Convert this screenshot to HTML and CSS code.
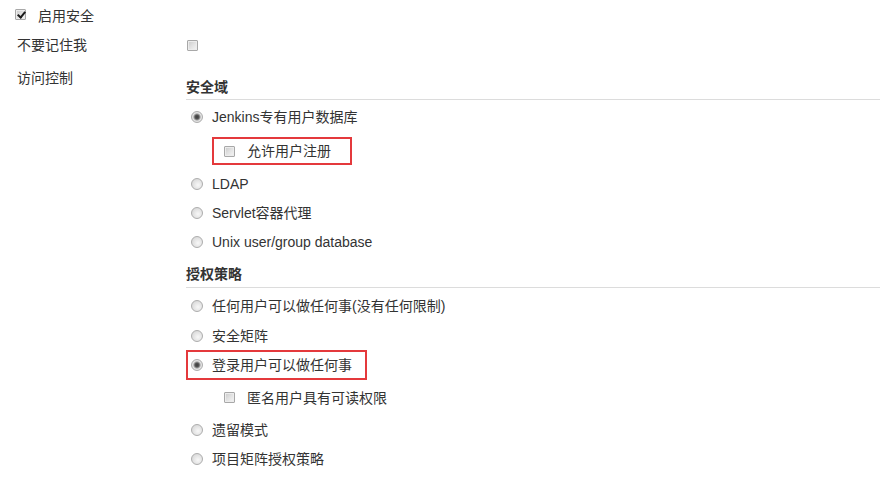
FILE: index.html
```html
<!DOCTYPE html>
<html lang="zh-CN">
<head>
<meta charset="utf-8">
<title>启用安全</title>
<link rel="stylesheet" href="styles.css">
</head>
<body>
<div class="page">
  <label class="top-row">
    <input type="checkbox" class="cb" checked>
    <span class="top-label">启用安全</span>
  </label>
  <div class="form-grid">
    <div class="label label-short">不要记住我</div>
    <div class="field field-short"><input type="checkbox" class="cb"></div>

    <div class="label label-access">访问控制</div>
    <div class="field">
      <div class="section-head head-first">安全域</div>
      <div class="options opts-first">
        <label class="opt"><input type="radio" name="realm" class="rb" checked><span>Jenkins专有用户数据库</span></label>
        <label class="sub hl sub-first"><input type="checkbox" class="cb"><span>允许用户注册</span></label>
        <label class="opt"><input type="radio" name="realm" class="rb"><span>LDAP</span></label>
        <label class="opt"><input type="radio" name="realm" class="rb"><span>Servlet容器代理</span></label>
        <label class="opt"><input type="radio" name="realm" class="rb"><span>Unix user/group database</span></label>
      </div>
      <div class="section-head head-second">授权策略</div>
      <div class="options opts-second">
        <label class="opt"><input type="radio" name="auth" class="rb"><span>任何用户可以做任何事(没有任何限制)</span></label>
        <label class="opt"><input type="radio" name="auth" class="rb"><span>安全矩阵</span></label>
        <label class="opt opt-hl"><input type="radio" name="auth" class="rb" checked><span>登录用户可以做任何事</span></label>
        <label class="sub sub-second"><input type="checkbox" class="cb"><span>匿名用户具有可读权限</span></label>
        <label class="opt opt-tall"><input type="radio" name="auth" class="rb"><span>遗留模式</span></label>
        <label class="opt opt-last"><input type="radio" name="auth" class="rb"><span>项目矩阵授权策略</span></label>
      </div>
    </div>
  </div>
</div>
</body>
</html>
```

FILE: styles.css
```css
html, body {
  margin: 0;
  padding: 0;
  background: #ffffff;
}

body {
  font-family: "Liberation Sans", "Noto Sans CJK SC", sans-serif;
  font-size: 14px;
  color: #333333;
}

.page {
  width: 880px;
}

label {
  cursor: default;
}

/* ---------- custom checkbox ---------- */
.cb {
  -webkit-appearance: none;
  appearance: none;
  margin: 0;
  width: 11px;
  height: 11px;
  box-sizing: border-box;
  border: 1px solid #a8a8a8;
  border-radius: 1px;
  background: linear-gradient(135deg, #c9c9c9 0%, #e2e2e2 50%, #f5f5f5 100%);
  box-shadow: inset 0 0 0 1px #ececec;
  position: relative;
  flex: none;
}

.cb:checked::after {
  content: "";
  position: absolute;
  left: 3px;
  top: 0px;
  width: 3px;
  height: 6px;
  border-right: 2px solid #1a1a1a;
  border-bottom: 2px solid #1a1a1a;
  transform: rotate(40deg);
}

/* ---------- custom radio ---------- */
.rb {
  -webkit-appearance: none;
  appearance: none;
  margin: 0;
  width: 12px;
  height: 12px;
  box-sizing: border-box;
  border: 1px solid #adadad;
  border-radius: 50%;
  background: radial-gradient(circle at 60% 60%, #f8f8f8 0%, #e2e2e2 55%, #cfcfcf 100%);
  flex: none;
}

.rb:checked {
  background: radial-gradient(circle at 50% 50%, #3c3c3c 0%, #555555 28%, #9a9a9a 42%, #e6e6e6 58%, #d2d2d2 100%);
}

/* ---------- top row ---------- */
.top-row {
  display: flex;
  align-items: center;
  height: 32px;
  padding-left: 15px;
}

.top-row .cb {
  margin-top: -3px;
}

.top-label {
  margin-left: 12px;
  line-height: 20px;
}

/* ---------- grid ---------- */
.form-grid {
  display: grid;
  grid-template-columns: 186px 1fr;
}

.label {
  padding-left: 17px;
  line-height: 20px;
}

.label-short {
  line-height: 26px;
}

.field-short {
  display: flex;
  align-items: center;
  height: 26px;
  padding-left: 1px;
}

.label-access {
  padding-top: 10px;
}

/* ---------- section headings ---------- */
.section-head {
  font-weight: bold;
  line-height: 20px;
  border-bottom: 1px solid #dcdcdc;
}

.head-first {
  padding-top: 19px;
  padding-bottom: 2px;
}

.head-second {
  padding-top: 8px;
  padding-bottom: 3px;
}

/* ---------- options ---------- */
.options {
  display: flex;
  flex-direction: column;
  align-items: flex-start;
}

.opts-first {
  padding-top: 2px;
}

.opts-second {
  padding-top: 3px;
}

.opt {
  display: flex;
  align-items: center;
  height: 29px;
  padding-left: 5px;
  line-height: 20px;
}

.opt:first-child {
  height: 30px;
}

.opt .rb {
  margin-right: 9px;
}

.opt-hl {
  box-sizing: border-box;
  height: 30px;
  border: 2px solid #e4393c;
  padding-left: 3px;
  padding-right: 13px;
}

.opt-tall {
  height: 30px;
}

.opt-last {
  height: 28px;
}

.sub {
  display: flex;
  align-items: center;
  box-sizing: border-box;
  margin-left: 26px;
  border: 2px solid transparent;
  padding: 0 19px 0 10px;
  line-height: 20px;
}

.sub .cb {
  margin-right: 12px;
}

.sub.hl {
  border-color: #e4393c;
}

.sub-first {
  height: 28px;
  margin-top: 5px;
  margin-bottom: 4px;
}

.sub-second {
  height: 35px;
}
```
